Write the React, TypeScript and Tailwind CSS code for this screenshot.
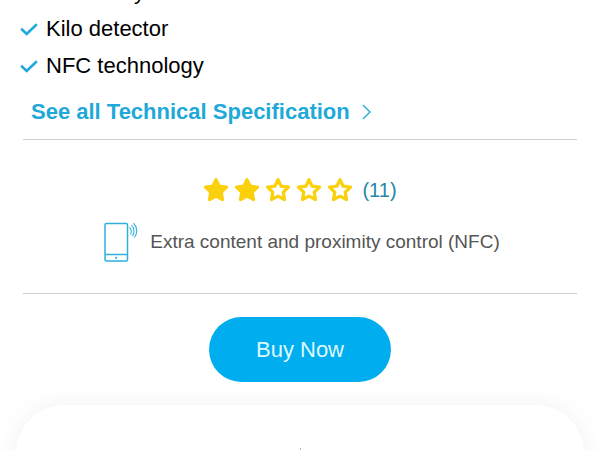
import React from 'react';

const features = ['Sensitivity', 'Kilo detector', 'NFC technology'];
const RATING = 2;

const STAR =
  'M13 3.2 L15.9 9.3 L22.7 10.2 L17.8 14.9 L19 21.6 L13 18.4 L7 21.6 L8.2 14.9 L3.3 10.2 L10.1 9.3 Z';

const Check = () => (
  <svg viewBox="0 0 18 14" className="w-[18px] h-[14px] shrink-0" fill="none" stroke="#1fa9dc" strokeWidth="2.6">
    <path d="M1.2 6.8 L6.7 12 L16.8 2.2" />
  </svg>
);

const Star = ({ filled }: { filled: boolean }) => (
  <svg
    viewBox="1 0.8 24 24"
    className="w-[26px] h-[26px]"
    fill={filled ? '#fbd10e' : 'none'}
    stroke="#fbd10e"
    strokeWidth="3"
    strokeLinejoin="round"
  >
    <path d={STAR} />
  </svg>
);

const PhoneIcon = () => (
  <svg viewBox="0 0 34 40" className="w-[34px] h-[40px] shrink-0" fill="none" stroke="#2fb1dc" strokeWidth="1.5">
    <rect x="1" y="1.5" width="22.5" height="37.5" rx="1.5" />
    <path d="M1 32.5 H23.5" />
    <circle cx="12.2" cy="35.8" r="1.1" fill="#2fb1dc" stroke="none" />
    <path d="M25.5 5 Q28.5 8.5 26.5 12.5 M27.5 3 Q32 8 28.5 14 M29.5 1.2 Q35.5 8 30.5 15.5" strokeWidth="1.1" />
  </svg>
);

export default function App() {
  return (
    <div className="h-screen overflow-hidden bg-white text-black font-['Liberation_Sans',Arial,sans-serif]">
      {/* Feature list */}
      <ul className="-mt-[27px] px-5 text-[22px]">
        {features.map((feature) => (
          <li key={feature} className="flex h-[37px] items-center gap-2">
            <Check />
            {feature}
          </li>
        ))}
      </ul>

      <section className="px-[23px]">
        <a href="#specs" className="flex h-[55px] items-center gap-3 px-2 text-[22px] font-bold text-[#1fa9d8]">
          See all Technical Specification
          <svg viewBox="0 0 9 16" className="w-[9px] h-[16px]" fill="none" stroke="currentColor" strokeWidth="1.3">
            <path d="M1 1 L8 8 L1 15" />
          </svg>
        </a>

        {/* Rating and content note */}
        <div className="h-[155px] border-y border-[#cfcfcf] pt-9">
          <div className="flex items-center justify-center gap-[5px]">
            {[0, 1, 2, 3, 4].map((i) => (
              <Star key={i} filled={i < RATING} />
            ))}
            <a href="#reviews" className="pl-1 text-xl text-[#2587a8]">(11)</a>
          </div>
          <div className="mt-[18px] flex items-center justify-center gap-3 pl-1 text-[19px] text-[#555]">
            <PhoneIcon />
            Extra content and proximity control (NFC)
          </div>
        </div>

        <div className="flex justify-center pt-[23px]">
          <button type="button" className="h-[65px] w-[182px] rounded-full bg-[#00aeef] text-[22px] text-[#dff8ff]">
            Buy Now
          </button>
        </div>
      </section>

      {/* Next card */}
      <section className="mx-4 mt-[23px] flex h-40 justify-center rounded-[48px] bg-white pt-[43px] shadow-[0_0_24px_rgba(0,0,0,0.06)]">
        <span className="h-4 w-px bg-[#b5b5b5]" />
      </section>
    </div>
  );
}
